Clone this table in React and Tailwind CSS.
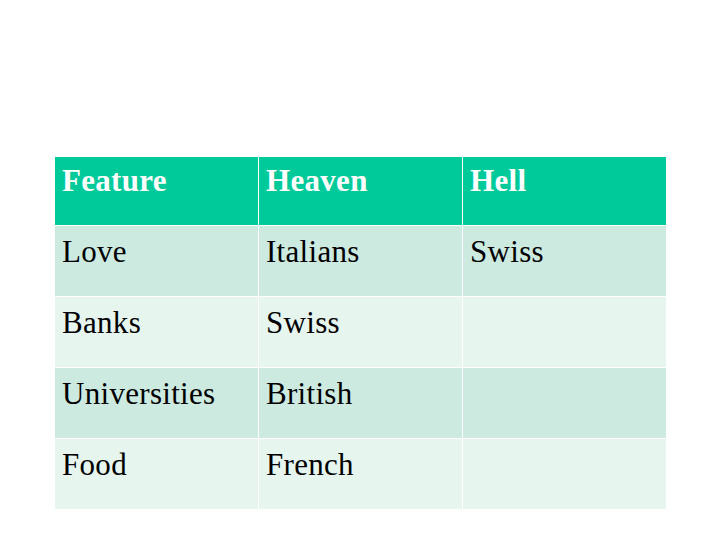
const rows = [
  ['Love', 'Italians', 'Swiss'],
  ['Banks', 'Swiss', ''],
  ['Universities', 'British', ''],
  ['Food', 'French', ''],
];

export default function App() {
  return (
    <div className="w-[720px] h-[540px] bg-white pt-[157px] pl-[55px]" style={{ fontFamily: '"Liberation Serif", "Times New Roman", serif' }}>
      <div className="grid grid-cols-[203px_203px_203px] gap-px w-[611px] bg-white text-[31px] leading-none tracking-[0.3px]">
        {['Feature', 'Heaven', 'Hell'].map((h, i) => (
          <div key={h} className={`h-[68px] bg-[#00c99a] text-white font-bold pt-[8px] ${i === 0 ? 'pl-[7px]' : 'pl-[7px]'}`}>{h}</div>
        ))}
        {rows.map((r, ri) => r.map((c, ci) => (
          <div key={ri + '-' + ci} className={`h-[70px] text-black pt-[10px] pl-[7px] ${ri % 2 === 0 ? 'bg-[#cceadf]' : 'bg-[#e7f5ef]'}`}>{c}</div>
        )))}
      </div>
    </div>
  );
}
